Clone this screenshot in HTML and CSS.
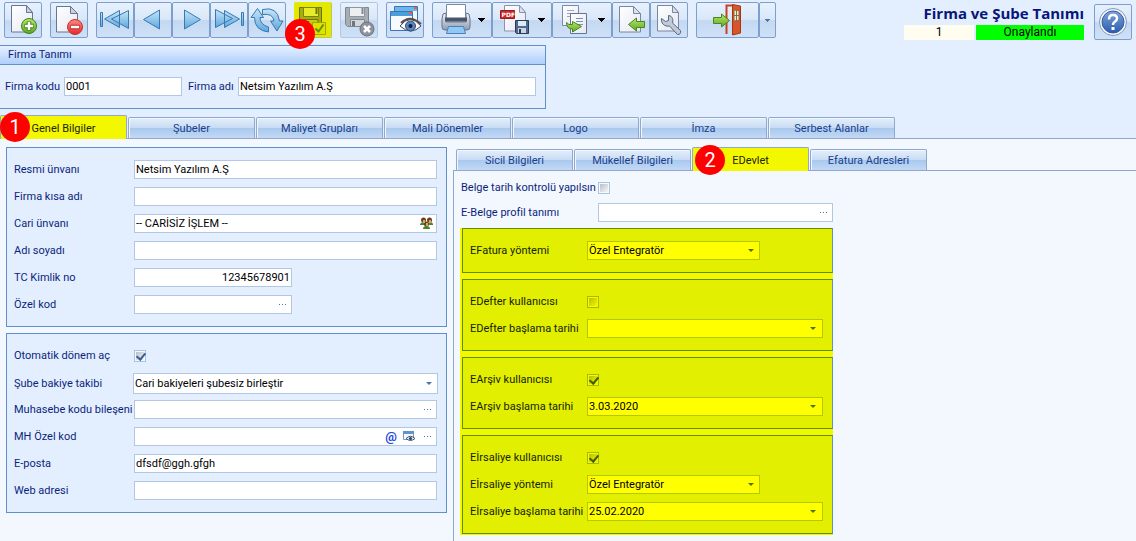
FILE: index.html
```html
<!DOCTYPE html>
<html lang="tr">
<head>
<meta charset="utf-8">
<title>Firma ve Şube Tanımı</title>
<link rel="stylesheet" href="styles.css">
</head>
<body>
<svg class="defs" aria-hidden="true">
  <defs>
    <linearGradient id="blue" x1="0" y1="0" x2="0" y2="1"><stop offset="0" stop-color="#c6e6f8"/><stop offset="1" stop-color="#5da6dc"/></linearGradient>
    <linearGradient id="page" x1="0" y1="0" x2="1" y2="1"><stop offset="0" stop-color="#ffffff"/><stop offset="1" stop-color="#e4e8f4"/></linearGradient>
    <linearGradient id="green" x1="0" y1="0" x2="0" y2="1"><stop offset="0" stop-color="#b6e86c"/><stop offset="1" stop-color="#5da820"/></linearGradient>
    <linearGradient id="red" x1="0" y1="0" x2="0" y2="1"><stop offset="0" stop-color="#ff8a80"/><stop offset="1" stop-color="#e02a2a"/></linearGradient>
    <linearGradient id="steel" x1="0" y1="0" x2="0" y2="1"><stop offset="0" stop-color="#f4f6fa"/><stop offset="1" stop-color="#8e9ab0"/></linearGradient>
    <linearGradient id="help" x1="0" y1="0" x2="0" y2="1"><stop offset="0" stop-color="#7fa6dc"/><stop offset="1" stop-color="#2a5cae"/></linearGradient>
  </defs>
</svg>

<header class="toolbar">
  <div class="tools">
    <button class="tool" type="button" aria-label="Yeni"><svg viewBox="5 3 36 34" width="36" height="34"><path d="M11.5 5.500h15l6 7v19.500h-21z" fill="url(#page)" stroke="#6a7590"/><path d="M26.500 5.500v7h6z" fill="#c9d0e4" stroke="#6a7590"/><circle cx="29" cy="26" r="7.500" fill="url(#green)" stroke="#3f7f1c"/><path d="M29 21.500v9M24.500 26h9" stroke="#3f7f1c" stroke-width="4.500"/><path d="M29 22v8M25 26h8" stroke="#fff" stroke-width="2.500"/></svg></button>
    <button class="tool" type="button" aria-label="Sil"><svg viewBox="51 3 36 34" width="36" height="34"><path d="M56.500 6.500h14l7 7v18.500h-21z" fill="url(#page)" stroke="#6a7590"/><path d="M70.500 6.500v7h7z" fill="#c9d0e4" stroke="#6a7590"/><circle cx="75" cy="27" r="7.500" fill="url(#red)" stroke="#cf2c2c"/><path d="M70.500 27h9" stroke="#c02828" stroke-width="4.500"/><path d="M71 27h8" stroke="#fff" stroke-width="2.500"/></svg></button>
    <div class="joined">
      <button class="tool" type="button" aria-label="İlk kayıt"><svg viewBox="97 3 36 34" width="36" height="34" fill="url(#blue)" stroke="#3878b4"><path d="M100.500 12.500h2v14h-2zM119.500 10.500v17l-15-8.500zM128.500 10.500v18l-17-9.500z"/></svg></button>
      <button class="tool" type="button" aria-label="Önceki kayıt"><svg viewBox="135 3 36 34" width="36" height="34" fill="url(#blue)" stroke="#3878b4"><path d="M159.500 10v19l-16-9.500z"/></svg></button>
      <button class="tool" type="button" aria-label="Sonraki kayıt"><svg viewBox="173 3 36 34" width="36" height="34" fill="url(#blue)" stroke="#3878b4"><path d="M184.500 10v19l16-9.500z"/></svg></button>
      <button class="tool" type="button" aria-label="Son kayıt"><svg viewBox="211 3 36 34" width="36" height="34" fill="url(#blue)" stroke="#3878b4"><path d="M241.500 12.500h2v13h-2zM224.500 10.500v17l15-8.500zM215.500 9.500v18l17-9z"/></svg></button>
      <button class="tool" type="button" aria-label="Yenile"><svg viewBox="249 3 36 34" width="36" height="34" fill="url(#blue)" stroke="#3878b4"><path d="M257.500 8.500l6 9h-3.500q0 7 8.500 9.500v5q-14-1.500-14-14.500h-3.500z"/><path d="M262.500 9.500q15-3.500 17 11.500h3.500l-6 10-6.500-10h3.500q-1-8-11.500-6.500z"/></svg></button>
    </div>
    <div class="save-slot">
      <button class="tool tool-marked" type="button" aria-label="Kaydet" disabled><svg viewBox="295 3 36 34" width="36" height="34"><path d="M299.500 7.500h22v19h-20l-2-2z" fill="#a6ac14" stroke="#6c7500"/><path d="M303.500 7.500h15v9h-15z" fill="#e6ec2c" stroke="#7c8400"/><path d="M315.500 8h2v6h-2z" fill="#6c7500"/><path d="M304 19.500h14v7h-14z" fill="#c5cc18" stroke="#6c7500"/><path d="M306 21h3v5h-3z" fill="#565c00"/><path d="M312.500 22.500h13v12h-13z" fill="#dce300" stroke="#a0a800"/><path d="M315.500 28.500l3 3 5-7" fill="none" stroke="#6c8c00" stroke-width="2"/></svg></button>
      <span class="step step-save">3</span>
    </div>
    <button class="tool" type="button" aria-label="Vazgeç" disabled><svg viewBox="341 3 36 34" width="36" height="34"><path d="M345.500 7.500h23v19h-21l-2-2z" fill="#a8adb5" stroke="#80868e"/><path d="M349.500 7.500h15v9h-15z" fill="#eceef1" stroke="#90969e"/><path d="M361.500 8h2v6h-2z" fill="#858a92"/><path d="M350.500 19.500h14v7h-14z" fill="#d2d5da" stroke="#80868e"/><path d="M352 21h3v5h-3z" fill="#70757d"/><circle cx="367" cy="29" r="7" fill="#8e949c" stroke="#6c7279"/><path d="M364 26l6 6M370 26l-6 6" stroke="#fff" stroke-width="2.500"/></svg></button>
    <button class="tool" type="button" aria-label="Önizleme"><svg viewBox="387 3 36 34" width="36" height="34"><path d="M394.500 6.500h23v19h-23z" fill="#f2f8ff" stroke="#3a75b5"/><path d="M395 7h22v4h-22z" fill="#6bb6ea"/><path d="M390.500 11.500h22v19h-22z" fill="#f7fbff" stroke="#3a75b5"/><path d="M391 12h21v4h-21z" fill="#4f9edc"/><path d="M409 12h3v2h-3zM414 7h3v2h-3z" fill="#f06048"/><path d="M400 26q10-13 21 0-10 10-21 0z" fill="#fff" stroke="#384a64"/><path d="M401 23q9-9 20 1" fill="none" stroke="#5e4a48" stroke-width="2"/><circle cx="410.500" cy="26" r="5" fill="#5686bd" stroke="#2d4c77"/><circle cx="410.500" cy="26" r="2" fill="#101c30"/></svg></button>
    <div class="joined">
      <button class="tool" type="button" aria-label="Yazdır"><svg viewBox="433 3 58 34" width="58" height="34"><path d="M443 14l3-1v9h20v-9l3 1 1 5v8q0 3-3 3h-22q-3 0-3-3v-8z" fill="url(#steel)" stroke="#68758e"/><path d="M446.500 4.500h19v14h-19z" fill="#fff" stroke="#7b86a0"/><path d="M445 17.500h22v4h-22z" fill="#49556b"/><path d="M448.500 26.500h15l2 7h-19z" fill="#91c8f4" stroke="#4c80b8"/><path d="M478 18h7v1h-1v1h-1v1h-1v1h-1v-1h-1v-1h-1v-1h-1z"/></svg></button>
      <button class="tool" type="button" aria-label="PDF olarak kaydet"><svg viewBox="493 3 58 34" width="58" height="34"><path d="M504.500 5.500h15l6 7v18.500h-21z" fill="url(#page)" stroke="#8b93a8"/><path d="M519.500 5.500v7h6z" fill="#dce1ec" stroke="#8b93a8"/><path d="M500.500 10.500h14v8h-14z" fill="#c92828" stroke="#a31616"/><text x="501.500" y="17" class="pdf-text">PDF</text><path d="M515.500 20.500h13v13h-12l-1-1z" fill="#52698e" stroke="#2c3c58"/><path d="M518 21h8v5h-8z" fill="#dceaf8"/><path d="M518 28h8v5h-8z" fill="#c9d4e4"/><path d="M519 29h2v4h-2z" fill="#2c3c58"/><path d="M538 18h7v1h-1v1h-1v1h-1v1h-1v-1h-1v-1h-1v-1h-1z"/></svg></button>
      <button class="tool" type="button" aria-label="Kopyala"><svg viewBox="553 3 58 34" width="58" height="34"><path d="M562.500 5.500h16v20h-16z" fill="url(#page)" stroke="#7b88a8"/><path d="M567 10.500h7M567 13.500h7M567 16.500h7" stroke="#9aa5bd"/><path d="M570.500 13.500h16v20h-16z" fill="url(#page)" stroke="#66758f"/><path d="M576 18.500h7M576 21.500h7M576 24.500h7" stroke="#7d92b8"/><path d="M566.500 22.500q2 3 6 2v-3l9 5-9 5.500v-3q-6 0-6-6.500z" fill="url(#green)" stroke="#4b851e"/><path d="M598 18h7v1h-1v1h-1v1h-1v1h-1v-1h-1v-1h-1v-1h-1z"/></svg></button>
      <button class="tool" type="button" aria-label="İçe aktar"><svg viewBox="613 3 36 34" width="36" height="34"><path d="M619.500 6.500h14l7 7v18.500h-21z" fill="url(#page)" stroke="#7b86a0"/><path d="M633.500 6.500v7h7z" fill="#dce1ec" stroke="#7b86a0"/><path d="M628.500 24.500l8-6.500v3.500h8v6h-8v3.500z" fill="url(#green)" stroke="#4b851e"/></svg></button>
      <button class="tool" type="button" aria-label="Ayarlar"><svg viewBox="651 3 36 34" width="36" height="34"><path d="M657.500 5.500h15l6 7v18.500h-21z" fill="url(#page)" stroke="#7b86a0"/><path d="M672.500 5.500v7h6z" fill="#dce1ec" stroke="#7b86a0"/><path d="M661.500 18.500l4 3 3-1v-5c4 0 5 5 4 7.500l8 7.500q1 4-3 4l-8-8.500c-5 1-9-3-8-7.500z" fill="#c0cad8" stroke="#56657e"/></svg></button>
    </div>
    <div class="joined">
      <button class="tool" type="button" aria-label="Çıkış"><svg viewBox="697 3 61 34" width="61" height="34"><path d="M726.500 34V5.500h6" fill="none" stroke="#c8401e" stroke-width="2"/><path d="M732.500 4.500l8 1.500v27l-8 2z" fill="#d9542a" stroke="#a63510"/><path d="M734 10l5 .5v10l-5 .5z" fill="#f4ecc8" stroke="#8c6a48"/><path d="M736.500 10v11M734 15.500h5" stroke="#8c6a48"/><path d="M713.500 17.500h8v-3.500l8 6.500-8 6.500v-3.500h-8z" fill="url(#green)" stroke="#4b851e"/></svg></button>
      <button class="tool" type="button" aria-label="Çıkış seçenekleri"><svg viewBox="760 3 15 34" width="15" height="34"><path d="M765 19h5v1h-1v1h-1v1h-1v-1h-1v-1h-1z" fill="#4a76b8"/></svg></button>
    </div>
  </div>
  <div class="heading">
    <h1>Firma ve Şube Tanımı</h1>
    <div class="status"><span class="status-id">1</span><span class="status-text">Onaylandı</span></div>
  </div>
  <button class="tool tool-help" type="button" aria-label="Yardım"><svg viewBox="1095 5 36 34" width="36" height="34"><circle cx="1113" cy="22" r="13.500" fill="#f4f8fe" stroke="#8097bb"/><circle cx="1113" cy="22" r="11" fill="url(#help)" stroke="#365c9c"/><path d="M1109 19.500q0-4.500 4-4.500t4 3.500q0 2-2.500 3.500-1.500 1-1.500 3" fill="none" stroke="#fff" stroke-width="2.500"/><path d="M1111.500 27h3v3h-3z" fill="#fff"/></svg></button>
</header>

<section class="company">
  <h2>Firma Tanımı</h2>
  <div class="company-row">
    <label for="kod">Firma kodu</label>
    <input class="field field-code" id="kod" type="text" value="0001">
    <label for="ad">Firma adı</label>
    <input class="field field-name" id="ad" type="text" value="Netsim Yazılım A.Ş">
  </div>
</section>

<nav class="tabs" role="tablist">
  <button class="tab tab-active" role="tab" type="button" aria-selected="true">Genel Bilgiler<span class="step step-general">1</span></button>
  <button class="tab" role="tab" type="button">Şubeler</button>
  <button class="tab" role="tab" type="button">Maliyet Grupları</button>
  <button class="tab" role="tab" type="button">Mali Dönemler</button>
  <button class="tab" role="tab" type="button">Logo</button>
  <button class="tab" role="tab" type="button">İmza</button>
  <button class="tab" role="tab" type="button">Serbest Alanlar</button>
</nav>

<main class="content">
  <div class="left">
    <section class="panel">
      <div class="row"><label for="unvan">Resmi ünvanı</label><input class="field" id="unvan" type="text" value="Netsim Yazılım A.Ş"></div>
      <div class="row"><label for="kisa">Firma kısa adı</label><input class="field" id="kisa" type="text"></div>
      <div class="row"><label for="cari">Cari ünvanı</label>
        <div class="field compound"><input id="cari" type="text" value="-- CARİSİZ İŞLEM --">
          <button class="mini" type="button" aria-label="Cari seç"><svg viewBox="0 0 14 13" width="14" height="13"><path d="M0 7q2-3 5-1v2H0zM9 8V6q3-2 4 1v1zM3 12q0-3 3.500-3t3.500 3z" fill="#3f8a2c"/><circle cx="3.500" cy="3" r="2.500" fill="#6b4020"/><circle cx="9.500" cy="3" r="2.500" fill="#6b4020"/><circle cx="6.500" cy="7" r="2.500" fill="#6b4020"/><path d="M3 3h2v3H3zM9 3h2v3H9zM6 6h2v3H6z" fill="#dda467"/></svg></button></div></div>
      <div class="row"><label for="soyad">Adı soyadı</label><input class="field" id="soyad" type="text"></div>
      <div class="row"><label for="tc">TC Kimlik no</label><input class="field field-short field-number" id="tc" type="text" value="12345678901"></div>
      <div class="row"><label for="ozel">Özel kod</label>
        <div class="field field-short compound"><input id="ozel" type="text"><button class="mini dots" type="button" aria-label="Özel kod seç"></button></div></div>
    </section>
    <section class="panel">
      <div class="row"><label for="donem">Otomatik dönem aç</label><input class="check" id="donem" type="checkbox" checked></div>
      <div class="row"><label for="bakiye">Şube bakiye takibi</label>
        <div class="field compound tall"><select id="bakiye"><option>Cari bakiyeleri şubesiz birleştir</option></select></div></div>
      <div class="row"><label for="muhasebe">Muhasebe kodu bileşeni</label>
        <div class="field compound"><input id="muhasebe" type="text"><button class="mini dots" type="button" aria-label="Muhasebe kodu seç"></button></div></div>
      <div class="row"><label for="mh">MH Özel kod</label>
        <div class="field compound"><input id="mh" type="text">
          <button class="mini at" type="button">@</button>
          <button class="mini" type="button" aria-label="Görüntüle"><svg viewBox="0 0 12 11" width="12" height="11"><path d="M.5.5h10v8H.5z" fill="#f4f8ff" stroke="#7c98bc"/><path d="M0 0h11v3H0z" fill="#5d94ce"/><path d="M3 7.500q4.500-4.500 9 0-4.500 4-9 0z" fill="#dce4ee" stroke="#44597a"/><circle cx="7.500" cy="7.500" r="1.500" fill="#2c4468"/></svg></button>
          <button class="mini dots" type="button" aria-label="MH Özel kod seç"></button></div></div>
      <div class="row"><label for="eposta">E-posta</label><input class="field" id="eposta" type="text" value="dfsdf@ggh.gfgh"></div>
      <div class="row"><label for="web">Web adresi</label><input class="field" id="web" type="text"></div>
    </section>
  </div>

  <div class="right">
    <nav class="tabs subtabs" role="tablist">
      <button class="tab" role="tab" type="button">Sicil Bilgileri</button>
      <button class="tab" role="tab" type="button">Mükellef Bilgileri</button>
      <button class="tab tab-active" role="tab" type="button" aria-selected="true">EDevlet<span class="step step-gov">2</span></button>
      <button class="tab" role="tab" type="button">Efatura Adresleri</button>
    </nav>
    <div class="sheet">
      <div class="sheet-form">
        <div class="row row-wide"><label for="tarih">Belge tarih kontrolü yapılsın</label><input class="check" id="tarih" type="checkbox"></div>
        <div class="row row-wide"><label for="profil">E-Belge profil tanımı</label>
          <div class="field compound"><input id="profil" type="text"><button class="mini dots" type="button" aria-label="Profil seç"></button></div></div>
        <div class="marked">
          <section class="panel">
            <div class="row"><label for="efatura">EFatura yöntemi</label><div class="field field-method compound"><select id="efatura"><option>Özel Entegratör</option></select></div></div>
          </section>
          <section class="panel">
            <div class="row"><label for="edefter">EDefter kullanıcısı</label><input class="check" id="edefter" type="checkbox"></div>
            <div class="row"><label for="edefter-t">EDefter başlama tarihi</label><div class="field compound"><input id="edefter-t" type="text"><button class="mini arrow" type="button" aria-label="Tarih seç"></button></div></div>
          </section>
          <section class="panel">
            <div class="row"><label for="earsiv">EArşiv kullanıcısı</label><input class="check" id="earsiv" type="checkbox" checked></div>
            <div class="row"><label for="earsiv-t">EArşiv başlama tarihi</label><div class="field compound"><input id="earsiv-t" type="text" value="3.03.2020"><button class="mini arrow" type="button" aria-label="Tarih seç"></button></div></div>
          </section>
          <section class="panel">
            <div class="row"><label for="eirsaliye">Eİrsaliye kullanıcısı</label><input class="check" id="eirsaliye" type="checkbox" checked></div>
            <div class="row"><label for="eirsaliye-y">Eİrsaliye yöntemi</label><div class="field field-method compound"><select id="eirsaliye-y"><option>Özel Entegratör</option></select></div></div>
            <div class="row"><label for="eirsaliye-t">Eİrsaliye başlama tarihi</label><div class="field compound"><input id="eirsaliye-t" type="text" value="25.02.2020"><button class="mini arrow" type="button" aria-label="Tarih seç"></button></div></div>
          </section>
        </div>
      </div>
    </div>
  </div>
</main>
</body>
</html>
```
FILE: styles.css
```css
* { box-sizing: border-box; }

:root {
  --ink: #0c1f7c;
  --line: #5f90cc;
  --field-line: #b2c8e2;
  --field: #ffffff;
  --panel: #e3efff;
  --accent: #4a76b0;
}

body {
  margin: 0;
  min-height: 100vh;
  display: flex;
  flex-direction: column;
  background: #e3efff;
  color: var(--ink);
  font: 11px/14px Tahoma, Roboto, sans-serif;
}

button, input, select { font: inherit; color: inherit; }
.defs { position: absolute; width: 0; height: 0; }

/* Toolbar */
.toolbar { display: flex; align-items: flex-start; padding: 2px 4px 5px; }
.tools { display: flex; gap: 8px; flex: 1; }
.joined { display: flex; }
.tool {
  display: block;
  padding: 0;
  border: 1px solid #7d9fce;
  border-radius: 2px;
  background: linear-gradient(#e8f1fd 0%, #d9e7f8 48%, #c3d8f1 52%, #cfe1f7 100%);
}
.tool svg { display: block; }
.tool:disabled { border-color: #b3c7e2; }
.tool-marked:disabled {
  border-color: #e4ea00 #b9c660 #b9c660 #e4ea00;
  background: #e2e800;
}
.save-slot { position: relative; }
.tool-help { margin-top: 2px; }
.pdf-text { font: bold 6px "DejaVu Sans", sans-serif; fill: #fff; }

.heading { margin-right: 10px; }
h1 {
  margin: 0;
  color: #08157a;
  font: bold 15px/23px "Open Sans", sans-serif;
  text-align: right;
}
.status { display: flex; gap: 2px; color: #000; font-size: 12px; line-height: 15px; text-align: center; }
.status-id { width: 70px; background: #fffcf0; }
.status-text { width: 108px; background: #00ff00; }

/* Numbered callouts */
.step {
  position: absolute;
  width: 30px;
  height: 30px;
  border-radius: 50%;
  background: #ff0000;
  color: #fff;
  font: 20px/30px Roboto, sans-serif;
  text-align: center;
}
.step-save { left: -9px; top: 17px; }
.step-general { left: -1px; top: -4px; }
.step-gov { left: 2px; top: -3px; }

/* Company box */
.company {
  width: 546px;
  max-width: 100%;
  border: solid var(--line);
  border-width: 1px 1px 1px 0;
}
h2 {
  margin: 0;
  padding: 0 8px;
  border-bottom: 1px solid var(--line);
  background: linear-gradient(#e6f0ff, #aed0fb);
  font: inherit;
  line-height: 18px;
}
.company-row { display: flex; align-items: center; padding: 12px 9px 12px 5px; }
.company-row label:first-child { width: 59px; }
.company-row label:nth-of-type(2) { width: 50px; }
.field-code.field { flex: 0 0 118px; margin-right: 6px; }

/* Tabs */
.tabs { display: flex; align-items: flex-end; gap: 1px; height: 23px; margin-top: 6px; }
.tab {
  flex: 0 1 127px;
  height: 21px;
  padding: 2px 0 0;
  border: 1px solid #90a8d0;
  border-bottom: 0;
  border-radius: 2px 2px 0 0;
  background: linear-gradient(#e4eefb 0%, #c9dcf5 48%, #aac8ee 52%, #c3d9f5 100%);
  box-shadow: inset 1px 1px #f1f7ff;
  color: #17408c;
  white-space: nowrap;
}
.tab-active {
  position: relative;
  height: 24px;
  margin-bottom: -1px;
  background: #f3f800;
  box-shadow: none;
  color: #1c2400;
}

/* Form area */
.content {
  flex: 1;
  display: flex;
  gap: 6px;
  padding: 8px 0 0 6px;
  border-top: 1px solid #90a8d0;
  background: #f3f8ff;
}
.left { flex: 0 0 441px; display: flex; flex-direction: column; gap: 6px; }
.panel {
  display: grid;
  gap: 8px;
  padding: 12px 9px 12px 7px;
  border: 1px solid var(--line);
  background: var(--panel);
}
.row { display: grid; grid-template-columns: 120px 1fr; align-items: center; height: 19px; }
.row label { white-space: nowrap; }
.field {
  flex: 1;
  width: 100%;
  min-width: 0;
  height: 19px;
  padding: 0 1px;
  border: 1px solid var(--field-line);
  background: var(--field);
  color: #000;
}
.field-short { width: 158px; }
.field-method { width: 173px; }
.field-number { text-align: right; }
.compound { position: relative; display: flex; align-items: center; }
.compound input, .compound select {
  flex: 1;
  min-width: 0;
  height: 100%;
  padding: 0;
  border: 0;
  background: none;
  appearance: none;
}
.compound:has(select)::after, .arrow::after {
  content: "";
  border: solid transparent;
  border-width: 3px 3px 0;
  border-top-color: var(--accent);
}
.compound:has(select)::after { margin-right: 4px; }
.tall { width: auto; height: 21px; margin: 0 -1px; }

.mini {
  display: flex;
  align-items: center;
  justify-content: center;
  width: 16px;
  height: 15px;
  padding: 0;
  border: 0;
  background: none;
}
.mini + .mini { margin-left: 2px; }
.dots::after {
  content: "";
  width: 7px;
  height: 1px;
  background: repeating-linear-gradient(90deg, var(--accent) 0 1px, transparent 1px 3px);
}
.at { color: #2447e0; font-size: 13px; font-weight: bold; }

.check {
  width: 12px;
  height: 12px;
  margin: 0;
  border: 1px solid #a9c3e2;
  background: linear-gradient(135deg, #b9bfca, #f4f6f8) center / 8px 8px no-repeat #f6f9fd;
  appearance: none;
}
.check:checked::after {
  content: "";
  display: block;
  width: 4px;
  height: 7px;
  margin: 0 3px;
  border: solid #3d5f95;
  border-width: 0 2px 2px 0;
  transform: rotate(40deg);
}

.right { flex: 1; display: flex; flex-direction: column; min-width: 0; }
.subtabs { margin: 0; padding-left: 3px; }
.subtabs .tab { flex-basis: 117px; }
.sheet {
  flex: 1;
  padding: 7px 6px 6px;
  border: solid #90a8d0;
  border-width: 1px 0 0 1px;
}
.sheet-form { display: grid; gap: 6px; max-width: 373px; }
.row-wide { grid-template-columns: 137px 1fr; padding-left: 1px; }

/* Highlighted e-government groups */
.marked {
  --ink: #142400;
  --line: #5f9000;
  --field-line: #b2c800;
  --field: #ffff00;
  --panel: #e3ef00;
  --accent: #4a7600;
  display: grid;
  gap: 6px;
  padding: 0 0 1px 2px;
  background: #f3f800;
  color: var(--ink);
}
.marked .row { grid-template-columns: 117px 1fr; }
.marked .panel { border-right-color: #5f90cc; }
.marked .check {
  border-color: #a9b800;
  background: linear-gradient(135deg, #b9bf00, #f4f600) center / 8px 8px no-repeat #f6f900;
}
.marked .check:checked::after { border-color: #3d5f00; }
```
